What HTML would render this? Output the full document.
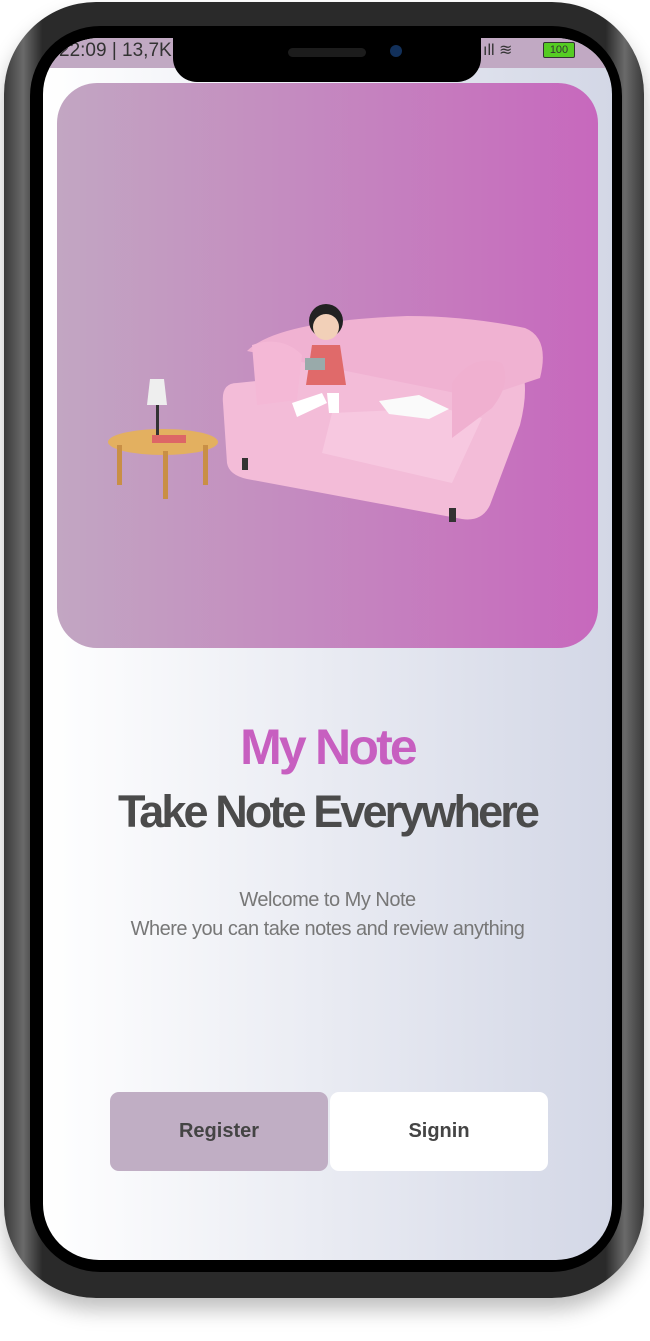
<!DOCTYPE html>
<html><head><style>
body{margin:0;width:650px;height:1341px;background:#fff;position:relative;overflow:hidden;font-family:"Liberation Sans",sans-serif}
.abs{position:absolute}
.phone{left:4px;top:2px;width:640px;height:1296px;border-radius:92px;background:linear-gradient(90deg,#3a3a3a,#6a6a6a 3%,#2a2a2a 6%,#2a2a2a 94%,#6a6a6a 97%,#3a3a3a);box-shadow:0 12px 20px rgba(0,0,0,.25)}
.bez{left:30px;top:26px;width:592px;height:1246px;border-radius:70px;background:#000}
.scr{left:43px;top:38px;width:569px;height:1222px;border-radius:56px;background:linear-gradient(90deg,#fff,#d3d7e6);overflow:hidden}
.sb{left:0;top:0;width:569px;height:30px;background:#c1a9c3;font-size:19px;color:#333}
.notch{left:130px;top:0;width:308px;height:44px;background:#000;border-radius:0 0 24px 24px}
.card{left:14px;top:45px;width:541px;height:565px;border-radius:40px;background:linear-gradient(90deg,#c2a6c2,#c768bd)}
.t1{left:0;width:569px;text-align:center;top:680px;font-size:50px;font-weight:bold;color:#c75fc0;letter-spacing:-2.8px}
.t2{left:0;width:569px;text-align:center;top:748px;font-size:45px;font-weight:bold;color:#4b4b4b;letter-spacing:-2.9px}
.t3{left:0;width:569px;text-align:center;top:848px;font-size:20px;color:#777;line-height:29px;letter-spacing:-.5px}
.btn{top:1054px;height:79px;width:218px;border-radius:9px;font-size:20px;font-weight:bold;color:#444;text-align:center;line-height:79px}
</style></head><body>
<div class="abs phone"></div>
<div class="abs bez"></div>
<div class="abs scr">
 <div class="abs sb"><span class="abs" style="left:16px;top:2px">22:09 | 13,7K</span>
  <span class="abs" style="left:440px;top:2px;font-size:16px">ıll ≋</span>
  <span class="abs" style="left:500px;top:4px;width:30px;height:14px;background:#5c2;border:1px solid #333;font-size:11px;line-height:14px;text-align:center;border-radius:2px">100</span></div>
 <div class="abs notch"><div class="abs" style="left:115px;top:10px;width:78px;height:9px;border-radius:5px;background:#1c1c1c"></div><div class="abs" style="left:217px;top:7px;width:12px;height:12px;border-radius:6px;background:#12305a"></div></div>
 <div class="abs card">
  <svg class="abs" style="left:0;top:0" width="541" height="565">
   <ellipse cx="106" cy="359" rx="55" ry="13" fill="#e3b060"/>
   <rect x="60" y="362" width="5" height="40" fill="#c98f45"/><rect x="106" y="368" width="5" height="48" fill="#c98f45"/><rect x="146" y="362" width="5" height="40" fill="#c98f45"/>
   <rect x="99" y="320" width="3" height="32" fill="#333"/><path d="M93 296h14l3 26h-20z" fill="#eee"/>
   <rect x="95" y="352" width="34" height="8" fill="#d66"/>
   <path d="M180 300q-16 0-14 20l4 60q2 12 20 16l215 40q20 3 28-14l30-80q10-40 0-60-6-12-24-14l-190-16q-20-1-24 14l-6 30z" fill="#f3bcd8"/>
   <path d="M190 268q30-30 160-35q60 0 118 12q25 10 15 50l-60 20z" fill="#f0b2d2"/>
   <path d="M275 330l110 -5 40 10 -30 65 -130 -30z" fill="#f7c8e0"/>
   <path d="M395 300q20-30 50-20q10 20-10 45l-40 30z" fill="#f0b0d0"/>
   <path d="M322 318l40-6 30 14-20 10-40-5z" fill="#fafafa"/>
   <path d="M195 262q30-10 50 10l-5 45-40 5z" fill="#f4b8d6"/>
   <rect x="185" y="375" width="6" height="12" fill="#333"/><rect x="392" y="425" width="7" height="14" fill="#333"/>
   <circle cx="269" cy="238" r="17" fill="#222"/><circle cx="269" cy="244" r="13" fill="#f2d0b8"/>
   <path d="M255 262h28l6 40h-40z" fill="#e06a6a"/><rect x="248" y="275" width="20" height="12" fill="#9aa"/>
   <path d="M235 320l30-10 5 10-30 14z" fill="#fff"/><path d="M270 310h12v20h-10z" fill="#fff"/>
  </svg>
 </div>
 <div class="abs t1">My Note</div>
 <div class="abs t2">Take Note Everywhere</div>
 <div class="abs t3">Welcome to My Note<br>Where you can take notes and review anything</div>
 <div class="abs btn" style="left:67px;background:#c0aec4">Register</div>
 <div class="abs btn" style="left:287px;background:#fff">Signin</div>
</div>
</body></html>
